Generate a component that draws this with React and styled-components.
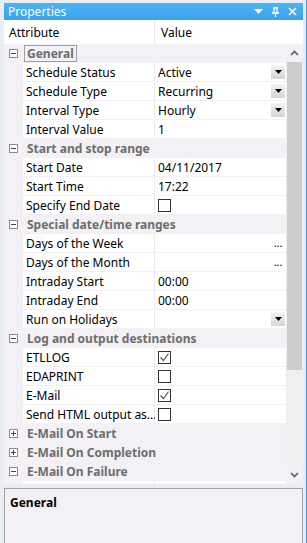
import React from "react";
import styled, { createGlobalStyle } from "styled-components";

const Global = createGlobalStyle`
  html, body { margin: 0; padding: 0; background: #ffffff; }
  body { font-family: "Noto Sans", "Open Sans", sans-serif; font-size: 12px; }
`;

const Frame = styled.div`
  width: 307px;
  height: 543px;
  box-sizing: border-box;
  background: #e9eef4;
  padding: 3px 3px 0 4px;
  border-right: 1px solid #3c9ce0;
  display: flex;
  flex-direction: column;
  overflow: hidden;
`;

const TitleBar = styled.div`
  height: 17px;
  background: linear-gradient(#4eb3f3, #3aa3ec);
  color: #fff;
  display: flex;
  align-items: center;
  padding-left: 4px;
  font-size: 12px;
  flex-shrink: 0;
`;

const TitleText = styled.div`
  flex: 1;
`;

const TitleIcons = styled.div`
  display: flex;
  align-items: center;
  gap: 8px;
  padding-right: 6px;
`;

const Header = styled.div`
  height: 24px;
  background: #fff;
  display: grid;
  grid-template-columns: 151px 1fr;
  flex-shrink: 0;
`;

const HeadCell = styled.div`
  display: flex;
  align-items: center;
  padding-left: ${(p) => p.pad}px;
  padding-top: 1px;
  border-right: ${(p) => (p.first ? "1px solid #ebe9ee" : "none")};
  color: #000;
`;

const GridArea = styled.div`
  height: 440px;
  display: flex;
  background: #f3f1f5;
  flex-shrink: 0;
  overflow: hidden;
`;

const Rows = styled.div`
  width: 283px;
  display: flex;
  flex-direction: column;
`;

const GroupRow = styled.div`
  height: 19px;
  display: flex;
  align-items: center;
  flex-shrink: 0;
`;

const Toggle = styled.div`
  width: 19px;
  display: flex;
  justify-content: center;
  align-items: center;
`;

const GroupLabel = styled.div`
  font-weight: 700;
  color: #6d6d6d;
  margin-left: 1px;
  padding: 0 2px;
  line-height: 15px;
  border: 1px solid ${(p) => (p.focus ? "#a0a0a0" : "transparent")};
`;

const PropRow = styled.div`
  height: 18px;
  margin-bottom: 1px;
  margin-left: 19px;
  display: grid;
  grid-template-columns: 132px 1fr;
  flex-shrink: 0;
`;

const NameCell = styled.div`
  background: #fff;
  border-right: 1px solid #ebe9ee;
  padding-left: 3px;
  padding-top: 1px;
  display: flex;
  align-items: center;
  white-space: nowrap;
  color: #000;
`;

const ValueCell = styled.div`
  background: #fff;
  padding-left: 3px;
  display: flex;
  align-items: center;
  color: #000;
`;

const ValueText = styled.div`
  flex: 1;
  padding-top: 1px;
`;

const DropBtn = styled.div`
  width: 14px;
  height: 14px;
  margin-right: 1px;
  background: linear-gradient(#f4f4f4, #d4d4d4);
  display: flex;
  align-items: center;
  justify-content: center;
`;

const Dots = styled.div`
  width: 14px;
  margin-right: 1px;
  text-align: center;
  font-size: 11px;
  line-height: 10px;
`;

const Check = styled.div`
  width: 11px;
  height: 11px;
  border: 1px solid #333;
  background: #fff;
  display: flex;
  align-items: center;
  justify-content: center;
`;

const Scroll = styled.div`
  width: 17px;
  display: flex;
  flex-direction: column;
  background: #f0f0f0;
`;

const ScrollBtn = styled.div`
  height: 18px;
  display: flex;
  align-items: center;
  justify-content: center;
  background: #f3f1f5;
  flex-shrink: 0;
`;

const Track = styled.div`
  flex: 1;
  background: #f0f0f0;
  display: flex;
  flex-direction: column;
  padding: 0 1px;
`;

const Thumb = styled.div`
  height: 308px;
  background: #cdcdcd;
`;

const Desc = styled.div`
  margin-top: 4px;
  flex: 1;
  border: 1px solid #a0a0a0;
  border-bottom: none;
  background: #f3f1f5;
  padding: 5px 5px;
  font-weight: 700;
  color: #000;
`;

const Minus = ({ plus }) => (
  <svg width="9" height="9" viewBox="0 0 9 9">
    <rect x="0.5" y="0.5" width="8" height="8" fill="#fff" stroke="#8c8c8c" />
    <line x1="2" y1="4.5" x2="7" y2="4.5" stroke="#444" />
    {plus && <line x1="4.5" y1="2" x2="4.5" y2="7" stroke="#444" />}
  </svg>
);

const Arrow = () => (
  <svg width="7" height="4" viewBox="0 0 7 4">
    <path d="M0 0h7L3.5 4z" fill="#000" />
  </svg>
);

const Tick = () => (
  <svg width="11" height="11" viewBox="0 0 11 11">
    <path d="M1.5 5.5l3 3 5-7" fill="none" stroke="#555" strokeWidth="1.2" />
  </svg>
);

const data = [
  { group: "General", open: true, focus: true },
  { name: "Schedule Status", value: "Active", kind: "drop" },
  { name: "Schedule Type", value: "Recurring", kind: "drop" },
  { name: "Interval Type", value: "Hourly", kind: "drop" },
  { name: "Interval Value", value: "1" },
  { group: "Start and stop range", open: true },
  { name: "Start Date", value: "04/11/2017" },
  { name: "Start Time", value: "17:22" },
  { name: "Specify End Date", kind: "check" },
  { group: "Special date/time ranges", open: true },
  { name: "Days of the Week", kind: "dots" },
  { name: "Days of the Month", kind: "dots" },
  { name: "Intraday Start", value: "00:00" },
  { name: "Intraday End", value: "00:00" },
  { name: "Run on Holidays", kind: "drop" },
  { group: "Log and output destinations", open: true },
  { name: "ETLLOG", kind: "check", checked: true },
  { name: "EDAPRINT", kind: "check" },
  { name: "E-Mail", kind: "check", checked: true },
  { name: "Send HTML output as...", kind: "check" },
  { group: "E-Mail On Start" },
  { group: "E-Mail On Completion" },
  { group: "E-Mail On Failure", open: true },
  { name: "", kind: "check" },
];

function Row({ r }) {
  if (r.group) {
    return (
      <GroupRow>
        <Toggle>
          <Minus plus={!r.open} />
        </Toggle>
        <GroupLabel focus={r.focus}>{r.group}</GroupLabel>
      </GroupRow>
    );
  }
  return (
    <PropRow>
      <NameCell>{r.name}</NameCell>
      <ValueCell>
        {r.kind === "check" ? (
          <Check>{r.checked && <Tick />}</Check>
        ) : (
          <ValueText>{r.value}</ValueText>
        )}
        {r.kind === "drop" && (
          <DropBtn>
            <Arrow />
          </DropBtn>
        )}
        {r.kind === "dots" && <Dots>...</Dots>}
      </ValueCell>
    </PropRow>
  );
}

export default function App() {
  return (
    <>
      <Global />
      <Frame>
        <TitleBar>
          <TitleText>Properties</TitleText>
          <TitleIcons>
            <svg width="9" height="6" viewBox="0 0 9 6">
              <path d="M0 0h9L4.5 5z" fill="#fff" />
            </svg>
            <svg width="9" height="10" viewBox="0 0 9 10">
              <path d="M2 1h5M3 1v5M6 1v5M1 6h7M4.5 6v4" stroke="#fff" strokeWidth="1.3" fill="none" />
            </svg>
            <svg width="9" height="9" viewBox="0 0 9 9">
              <path d="M1 1l7 7M8 1l-7 7" stroke="#fff" strokeWidth="1.6" />
            </svg>
          </TitleIcons>
        </TitleBar>
        <Header>
          <HeadCell first pad={5}>Attribute</HeadCell>
          <HeadCell pad={6}>Value</HeadCell>
        </Header>
        <GridArea>
          <Rows>
            {data.map((r, i) => (
              <Row key={i} r={r} />
            ))}
          </Rows>
          <Scroll>
            <ScrollBtn>
              <svg width="9" height="6" viewBox="0 0 9 6">
                <path d="M1 5l3.5-3.5L8 5" stroke="#606060" strokeWidth="1.6" fill="none" />
              </svg>
            </ScrollBtn>
            <Track>
              <Thumb />
            </Track>
            <ScrollBtn>
              <svg width="9" height="6" viewBox="0 0 9 6">
                <path d="M1 1l3.5 3.5L8 1" stroke="#606060" strokeWidth="1.6" fill="none" />
              </svg>
            </ScrollBtn>
          </Scroll>
        </GridArea>
        <Desc>General</Desc>
      </Frame>
    </>
  );
}
